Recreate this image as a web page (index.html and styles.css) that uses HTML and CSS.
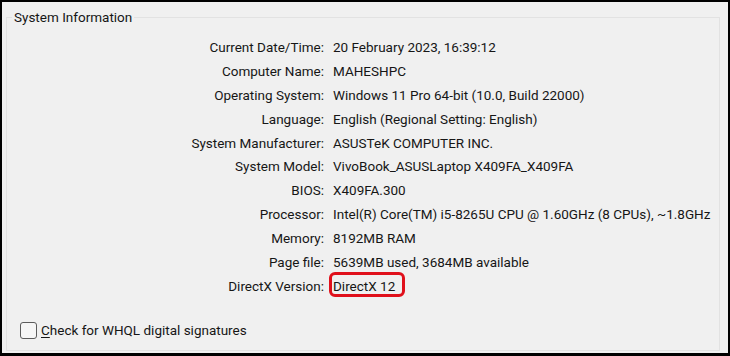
FILE: index.html
```html
<!DOCTYPE html>
<html>
<head>
<meta charset="utf-8">
<link rel="stylesheet" href="styles.css">
</head>
<body>
<div class="panel">
  <fieldset class="group">
    <legend class="group-title">System Information</legend>
    <dl class="info">
      <dt>Current Date/Time:</dt><dd>20 February 2023, 16:39:12</dd>
      <dt>Computer Name:</dt><dd>MAHESHPC</dd>
      <dt>Operating System:</dt><dd>Windows 11 Pro 64-bit (10.0, Build 22000)</dd>
      <dt>Language:</dt><dd>English (Regional Setting: English)</dd>
      <dt>System Manufacturer:</dt><dd>ASUSTeK COMPUTER INC.</dd>
      <dt>System Model:</dt><dd>VivoBook_ASUSLaptop X409FA_X409FA</dd>
      <dt>BIOS:</dt><dd>X409FA.300</dd>
      <dt>Processor:</dt><dd>Intel(R) Core(TM) i5-8265U CPU @ 1.60GHz (8 CPUs), ~1.8GHz</dd>
      <dt>Memory:</dt><dd>8192MB RAM</dd>
      <dt>Page file:</dt><dd>5639MB used, 3684MB available</dd>
      <dt>DirectX Version:</dt><dd><span class="highlight">DirectX 12</span></dd>
    </dl>
    <label class="check">
      <span class="check-box"></span>
      <span class="check-text"><u>C</u>heck for WHQL digital signatures</span>
    </label>
  </fieldset>
</div>
</body>
</html>
```
FILE: styles.css
```css
html, body {
  margin: 0;
  padding: 0;
  background: #000;
}

body {
  width: 730px;
  height: 356px;
  overflow: hidden;
  font-family: Roboto, "Liberation Sans", sans-serif;
  font-size: 13.5px;
  color: #161616;
}

.panel {
  margin: 2px 2px 0 2px;
  width: 726px;
  height: 351px;
  background: #f0f0f0;
  display: flex;
  flex-direction: column;
}

.group {
  margin: 5px 8px 2px 4px;
  padding: 0;
  border: 1px solid #e2e2e2;
  flex: 1;
  min-width: 0;
  display: flex;
  flex-direction: column;
}

.group-title {
  margin-left: 5px;
  padding: 0 2px;
  line-height: 21px;
}

.info {
  margin: 8px 0 0 0;
  display: grid;
  grid-template-columns: 317px 1fr;
  column-gap: 9px;
  grid-auto-rows: 23.9px;
  line-height: 23.9px;
}

.info dt {
  text-align: right;
  white-space: nowrap;
}

.info dd {
  margin: 0;
  white-space: nowrap;
}

.highlight {
  position: relative;
  display: inline-block;
}

.highlight::after {
  content: "";
  position: absolute;
  left: -4px;
  right: -10px;
  top: -3px;
  bottom: 2px;
  border: 3px solid #e0101b;
  border-radius: 6px;
}

.check {
  margin: 23px 0 0 13px;
  display: flex;
  align-items: center;
  gap: 4px;
  line-height: 17px;
}

.check-box {
  width: 15px;
  height: 15px;
  border: 1px solid #5c5c5c;
  border-radius: 3px;
  background: #f6f6f6;
}

.check-text u {
  text-underline-offset: 2px;
}
```
